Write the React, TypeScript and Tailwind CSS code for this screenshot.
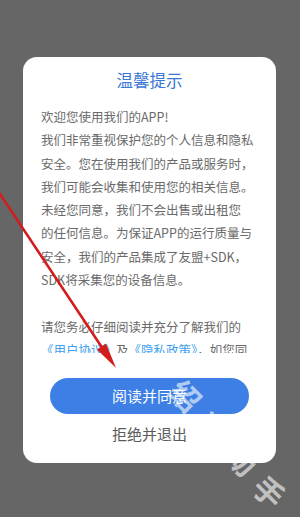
import React from "react";

const lines = [
  "欢迎您使用我们的APP!",
  "我们非常重视保护您的个人信息和隐私",
  "安全。您在使用我们的产品或服务时，",
  "我们可能会收集和使用您的相关信息。",
  "未经您同意，我们不会出售或出租您",
  "的任何信息。为保证APP的运行质量与",
  "安全，我们的产品集成了友盟+SDK，",
  "SDK将采集您的设备信息。",
];

export default function App() {
  const font = { fontFamily: '"Noto Sans CJK SC", "Noto Sans", sans-serif' };
  return (
    <div
      className="relative w-[300px] h-[517px] overflow-hidden bg-[#666666]"
      style={font}
    >
      <div className="pt-[57px] pl-[23px]">
        <div className="w-[253px] h-[406px] rounded-[14px] bg-white flex flex-col">
          <div className="pt-[12px] text-center text-[16.5px] leading-[22px] text-[#3a78d6]">
            温馨提示
          </div>
          <div className="mt-[14px] px-[18px] h-[248px] overflow-hidden text-[12.5px] leading-[23.3px] text-[#6a6a6a]">
            {lines.map((l) => (
              <div key={l} className="whitespace-nowrap">
                {l}
              </div>
            ))}
            <div className="h-[23.3px]" />
            <div className="whitespace-nowrap">请您务必仔细阅读并充分了解我们的</div>
            <div className="whitespace-nowrap">
              <span className="text-[#3ea0ee]">《用户协议》</span>
              <span>及</span>
              <span className="text-[#3ea0ee]">《隐私政策》</span>
              <span>，如您同</span>
            </div>
          </div>
          <div className="mt-[25px] self-center w-[199px] h-[36px] rounded-full bg-[#3d7fe5] flex items-center justify-center text-white text-[15px]">
            阅读并同意
          </div>
          <div className="mt-[10px] text-center text-[15px] leading-[20px] text-[#5a5a5a]">
            拒绝并退出
          </div>
        </div>
      </div>

      <svg
        className="absolute left-0 top-0 pointer-events-none"
        width="300"
        height="517"
        viewBox="0 0 300 517"
      >
        <line x1="-4" y1="188" x2="103" y2="349" stroke="#d21d1d" strokeWidth="2.6" strokeLinecap="round" />
        <polygon points="116,368 97,349.5 106,343.5" fill="#d21d1d" />
      </svg>

      {[
        { c: "绍", x: 186, y: 395 },
        { c: "兴", x: 214, y: 427 },
        { c: "动", x: 242, y: 459 },
        { c: "手", x: 270, y: 491 },
      ].map((w) => (
        <div
          key={w.c}
          className="absolute w-[34px] h-[34px] -ml-[17px] -mt-[17px] flex items-center justify-center text-[30px] font-bold leading-none text-white/60 rotate-45 pointer-events-none"
          style={{ left: w.x, top: w.y }}
        >
          {w.c}
        </div>
      ))}
    </div>
  );
}
